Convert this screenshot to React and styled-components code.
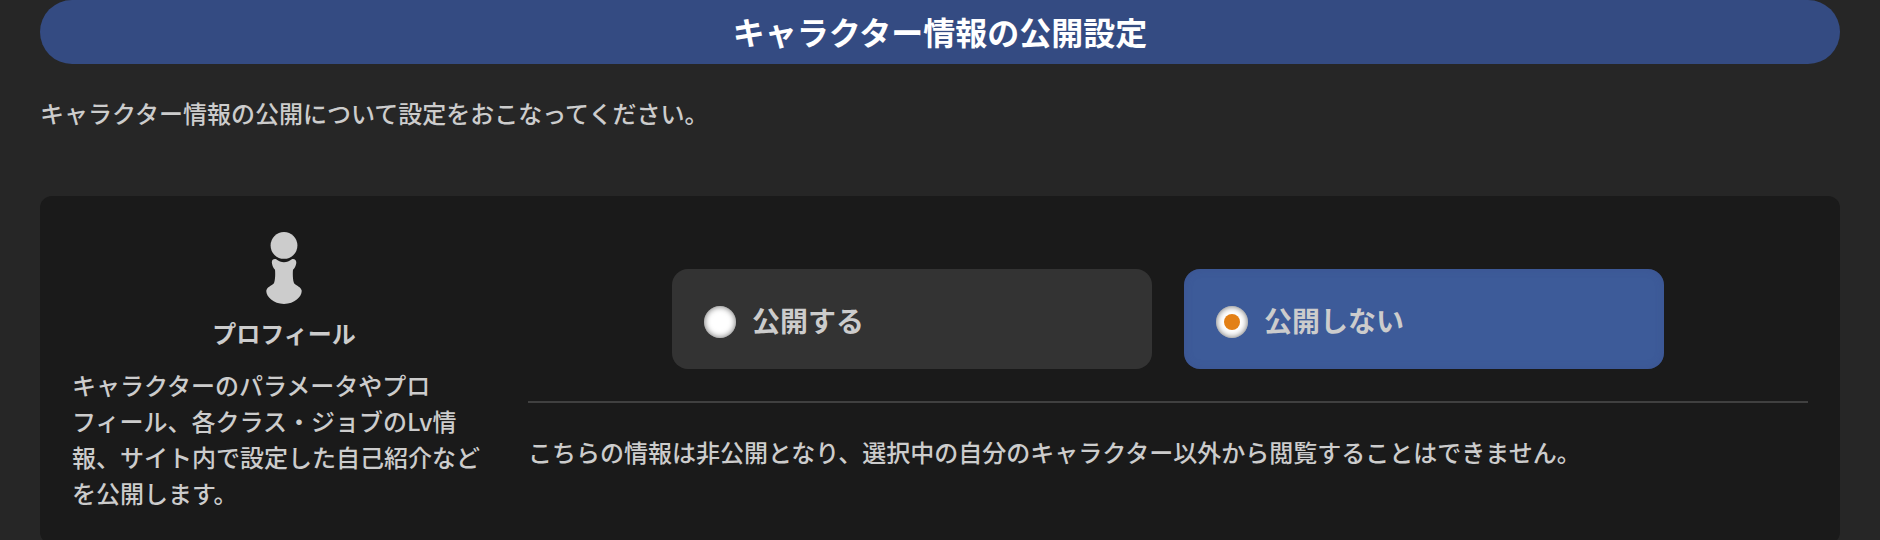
import { useState } from 'react'
import styled, { createGlobalStyle } from 'styled-components'

const options = [
  { value: 'public', label: '公開する' },
  { value: 'private', label: '公開しない' }
]

const notes = {
  public: 'こちらの情報は公開となり、すべてのプレイヤーから閲覧することができます。',
  private:
    'こちらの情報は非公開となり、選択中の自分のキャラクター以外から閲覧することはできません。'
}

const ProfileIcon = () => (
  <Icon viewBox="0 0 36 72">
    <circle cx="18" cy="13.4" r="13.4" />
    <path d="M6 31.4C5.200 28.400 7.400 26.400 10.200 27.300C15 31.200 21 31.200 25.800 27.300C28.600 26.400 30.800 28.400 30.200 31.400C29.800 34 28.700 36 27 37.800C26.600 42 26.800 47 27.800 50.600C28.400 53.300 34.300 54.200 35.600 58.200C36.600 63.500 29.300 71.900 18 71.900C6.700 71.900-0.600 63.500 0.400 58.200C1.700 54.200 7.600 53.300 8.200 50.600C9.200 47 9.400 42 9 37.800C7.500 36 6.300 34 6 31.400Z" />
  </Icon>
)

export default function App() {
  const [selected, setSelected] = useState('private')

  return (
    <Page>
      <GlobalStyle />
      <Heading>キャラクター情報の公開設定</Heading>
      <Lead>キャラクター情報の公開について設定をおこなってください。</Lead>
      <Card>
        <Side>
          <ProfileIcon />
          <SideTitle>プロフィール</SideTitle>
          <Description>
            キャラクターのパラメータやプロ
            <br />
            フィール、各クラス・ジョブのLv情
            <br />
            報、サイト内で設定した自己紹介など
            <br />
            を公開します。
          </Description>
        </Side>
        <Content>
          <Options>
            {options.map(d => (
              <Option key={d.value} $active={selected === d.value}>
                <Radio
                  name="profile"
                  checked={selected === d.value}
                  onChange={() => setSelected(d.value)}
                />
                <OptionLabel>{d.label}</OptionLabel>
              </Option>
            ))}
          </Options>
          <Note>{notes[selected]}</Note>
        </Content>
      </Card>
    </Page>
  )
}

const GlobalStyle = createGlobalStyle`
  * {
    box-sizing: border-box;
  }
  html {
    background: #262626;
    overflow: hidden;
  }
  body {
    margin: 0;
    color: #ccc;
    font-family: 'Noto Sans CJK JP', sans-serif;
    font-size: 24px;
    font-weight: 500;
    line-height: 36px;
  }
`
const Page = styled.main`
  padding: 0 40px;
`
const Heading = styled.h1`
  height: 64px;
  margin: 0;
  border-radius: 32px;
  background: #344b82;
  color: #fff;
  font-size: 32px;
  font-weight: bold;
  line-height: 62px;
  text-align: center;
`
const Lead = styled.p`
  margin: 31px 0 65px;
`
const Card = styled.section`
  display: flex;
  gap: 32px;
  height: 348px;
  padding: 36px 32px 32px;
  border-radius: 12px;
  background: #1a1a1a;
`
const Side = styled.div`
  display: flex;
  flex-flow: column;
  align-items: center;
  flex: 0 0 424px;
`
const Icon = styled.svg`
  width: 36px;
  height: 72px;
  fill: #ccc;
`
const SideTitle = styled.h2`
  margin: 11px 0 16px;
  font-size: 24px;
  font-weight: bold;
  line-height: 36px;
`
const Description = styled.p`
  align-self: stretch;
  margin: 0;
  white-space: nowrap;
`
const Content = styled.div`
  flex: 1;
  padding-top: 37px;
`
const Options = styled.div`
  display: flex;
  justify-content: center;
  gap: 32px;
  padding-bottom: 32px;
  border-bottom: 2px solid #404040;
`
const Option = styled.label`
  display: flex;
  align-items: center;
  gap: 16px;
  width: 480px;
  height: 100px;
  padding: 6px 32px 0;
  border-radius: 16px;
  background: ${props => (props.$active ? '#3d5b99' : '#333')};
  box-shadow: ${props =>
    props.$active ? 'inset 0 0 8px rgba(60, 70, 130, 0.3)' : 'none'};
  cursor: pointer;
`
const Radio = styled.input.attrs({ type: 'radio' })`
  appearance: none;
  display: grid;
  place-items: center;
  width: 32px;
  height: 32px;
  margin: 0;
  border-radius: 50%;
  background: #fff;
  box-shadow: inset 0 0 6px rgba(0, 0, 0, 0.6);

  &:checked::before {
    content: '';
    width: 16px;
    height: 16px;
    border-radius: 50%;
    background: #e38016;
  }
`
const OptionLabel = styled.span`
  padding-bottom: 5px;
  font-size: 28px;
  font-weight: bold;
  line-height: 42px;
`
const Note = styled.p`
  margin: 31px 0 0;
`
